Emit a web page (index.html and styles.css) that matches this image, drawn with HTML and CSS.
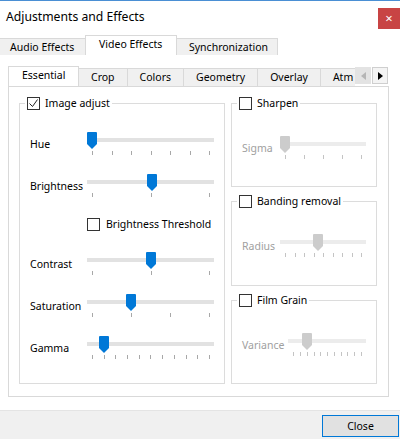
FILE: index.html
```html
<!DOCTYPE html>
<html lang="en">
<head>
  <meta charset="UTF-8">
  <title>Adjustments and Effects</title>
  <link rel="stylesheet" href="styles.css">
</head>
<body>

<div class="window">
  <header class="titlebar">
    <span class="title">Adjustments and Effects</span>
    <span class="close-x">&times;</span>
  </header>

  <nav class="tabs outer-tabs">
    <span class="tab">Audio Effects</span>
    <span class="tab active">Video Effects</span>
    <span class="tab">Synchronization</span>
  </nav>

  <main class="outer-pane">
    <nav class="inner-tabs">
      <div class="tabs tab-strip">
        <span class="tab active">Essential</span>
        <span class="tab">Crop</span>
        <span class="tab">Colors</span>
        <span class="tab">Geometry</span>
        <span class="tab">Overlay</span>
        <span class="tab partial">Atm</span>
      </div>
      <span class="scroll-btn disabled">
        <svg width="5" height="8" viewBox="0 0 5 8"><path d="M5 0v8L0 4z"/></svg>
      </span>
      <span class="scroll-btn">
        <svg width="5" height="8" viewBox="0 0 5 8"><path d="M0 0v8l5-4z"/></svg>
      </span>
    </nav>

    <div class="inner-pane">
      <fieldset class="group group-main">
        <legend><span class="check checked"><svg width="11" height="11" viewBox="0 0 11 11"><path d="M1.5 5.5l3 3 5-7" fill="none" stroke="#222" stroke-width="1"/></svg></span>Image adjust</legend>

        <div class="row">
          <span class="label">Hue</span>
          <div class="slider" style="--v:0">
            <div class="track"></div>
            <svg class="thumb" width="10" height="17" viewBox="0 0 10 17"><path d="M1 0h8a1 1 0 0 1 1 1v11l-5 5-5-5V1a1 1 0 0 1 1-1z"/></svg>
            <div class="ticks"><i></i><i></i><i></i><i></i><i></i><i></i><i></i></div>
          </div>
        </div>

        <div class="row">
          <span class="label">Brightness</span>
          <div class="slider" style="--v:0.51">
            <div class="track"></div>
            <svg class="thumb" width="10" height="17" viewBox="0 0 10 17"><path d="M1 0h8a1 1 0 0 1 1 1v11l-5 5-5-5V1a1 1 0 0 1 1-1z"/></svg>
            <div class="ticks"><i></i><i></i><i></i></div>
          </div>
        </div>

        <div class="row threshold">
          <span class="check"></span>Brightness Threshold
        </div>

        <div class="row">
          <span class="label">Contrast</span>
          <div class="slider" style="--v:0.5">
            <div class="track"></div>
            <svg class="thumb" width="10" height="17" viewBox="0 0 10 17"><path d="M1 0h8a1 1 0 0 1 1 1v11l-5 5-5-5V1a1 1 0 0 1 1-1z"/></svg>
            <div class="ticks"><i></i><i></i><i></i></div>
          </div>
        </div>

        <div class="row">
          <span class="label">Saturation</span>
          <div class="slider" style="--v:0.33">
            <div class="track"></div>
            <svg class="thumb" width="10" height="17" viewBox="0 0 10 17"><path d="M1 0h8a1 1 0 0 1 1 1v11l-5 5-5-5V1a1 1 0 0 1 1-1z"/></svg>
            <div class="ticks"><i></i><i></i><i></i><i></i></div>
          </div>
        </div>

        <div class="row">
          <span class="label">Gamma</span>
          <div class="slider" style="--v:0.1">
            <div class="track"></div>
            <svg class="thumb" width="10" height="17" viewBox="0 0 10 17"><path d="M1 0h8a1 1 0 0 1 1 1v11l-5 5-5-5V1a1 1 0 0 1 1-1z"/></svg>
            <div class="ticks"><i></i><i></i><i></i><i></i><i></i><i></i><i></i><i></i><i></i><i></i><i></i></div>
          </div>
        </div>
      </fieldset>

      <div class="side">
        <fieldset class="group group-side">
          <legend><span class="check"></span>Sharpen</legend>
          <div class="row disabled">
            <span class="label">Sigma</span>
            <div class="slider" style="--v:0">
              <div class="track"></div>
              <svg class="thumb" width="10" height="17" viewBox="0 0 10 17"><path d="M1 0h8a1 1 0 0 1 1 1v11l-5 5-5-5V1a1 1 0 0 1 1-1z"/></svg>
              <div class="ticks"><i></i><i></i><i></i><i></i><i></i></div>
            </div>
          </div>
        </fieldset>

        <fieldset class="group group-side">
          <legend><span class="check"></span>Banding removal</legend>
          <div class="row disabled">
            <span class="label">Radius</span>
            <div class="slider" style="--v:0.43">
              <div class="track"></div>
              <svg class="thumb" width="10" height="17" viewBox="0 0 10 17"><path d="M1 0h8a1 1 0 0 1 1 1v11l-5 5-5-5V1a1 1 0 0 1 1-1z"/></svg>
              <div class="ticks"><i></i><i></i><i></i><i></i><i></i><i></i><i></i><i></i><i></i></div>
            </div>
          </div>
        </fieldset>

        <fieldset class="group group-side">
          <legend><span class="check"></span>Film Grain</legend>
          <div class="row disabled">
            <span class="label">Variance</span>
            <div class="slider" style="--v:0.2">
              <div class="track"></div>
              <svg class="thumb" width="10" height="17" viewBox="0 0 10 17"><path d="M1 0h8a1 1 0 0 1 1 1v11l-5 5-5-5V1a1 1 0 0 1 1-1z"/></svg>
              <div class="ticks"><i></i><i></i><i></i><i></i><i></i><i></i><i></i><i></i><i></i><i></i><i></i></div>
            </div>
          </div>
        </fieldset>
      </div>
    </div>
  </main>

  <footer class="footer">
    <button class="btn">Close</button>
  </footer>
</div>

</body>
</html>
```

FILE: styles.css
```css
body {
  margin: 0;
  font-family: "Noto Sans", sans-serif;
  font-size: 10.5px;
  color: #000;
  background: #fff;
}
.window {
  width: 400px;
  height: 439px;
  display: flex;
  flex-direction: column;
  overflow: hidden;
}
.titlebar {
  height: 33px;
  border-top: 1px solid #4a8fd4;
  display: flex;
  padding-left: 6px;
  background: #fff;
}
.title {
  font-size: 12.2px;
  line-height: 32px;
}
.close-x {
  margin-left: auto;
  margin-top: 7px;
  width: 22px;
  height: 21px;
  background: #c84444;
  color: #fff;
  font-size: 13px;
  line-height: 20px;
  text-align: center;
}

/* tab headers */
.tabs {
  display: flex;
  align-items: flex-end;
}
.tab {
  height: 17px;
  line-height: 16px;
  padding: 0 11px;
  background: #f0f0f0;
  border: 1px solid #d9d9d9;
  border-bottom: none;
  margin-right: -1px;
  white-space: nowrap;
  box-sizing: border-box;
}
.tab.active {
  height: 20px;
  background: #fff;
  position: relative;
}
.outer-tabs {
  height: 21px;
}
.outer-tabs .tab:first-child {
  border-left: none;
  padding-left: 10px;
  width: 86px;
}
.outer-tabs .tab.active {
  width: 92px;
  padding-left: 13px;
}
.outer-tabs .tab:last-child {
  width: 102px;
  padding-left: 12px;
}

.outer-pane {
  flex: 1;
  background: #fff;
  padding: 11px 11px 13px 8px;
  display: flex;
  flex-direction: column;
}
.inner-tabs {
  height: 20px;
  display: flex;
  align-items: flex-start;
}
.tab-strip {
  width: 347px;
  height: 20px;
  overflow: hidden;
}
.tab-strip .tab {
  height: 18px;
  line-height: 17px;
  padding: 0 12px;
}
.tab-strip .tab.active {
  height: 20px;
  width: 71px;
  padding-left: 13px;
}
.tab-strip .tab.partial {
  flex: 1;
  border-right: none;
  padding-right: 0;
}
.scroll-btn {
  width: 16px;
  height: 17px;
  margin-top: 1px;
  box-sizing: border-box;
  border: 1px solid #cfcfcf;
  background: #f4f4f4;
  display: flex;
  align-items: center;
  justify-content: center;
}
.scroll-btn svg {
  fill: #000;
}
.scroll-btn.disabled {
  background: #e3e3e3;
  border-color: #e3e3e3;
  margin-right: 1px;
}
.scroll-btn.disabled svg {
  fill: #b5b5b5;
}

.inner-pane {
  flex: 1;
  border: 1px solid #d9d9d9;
  padding: 10px 11px 12px 10px;
  display: flex;
  gap: 6px;
}

/* group boxes */
.group {
  margin: 0;
  min-width: 0;
  border: 1px solid #dcdcdc;
  padding: 22px 10px 0 10px;
  display: flex;
  flex-direction: column;
  gap: 18px;
}
.group legend {
  margin-left: -5px;
  padding: 0 2px;
  display: flex;
  align-items: center;
  gap: 5px;
  line-height: 13px;
}
.group-main {
  width: 206px;
  box-sizing: border-box;
}
.side {
  flex: 1;
  display: flex;
  flex-direction: column;
  gap: 8px;
}
.group-side {
  flex: 1;
  padding-top: 26px;
}
.check {
  width: 13px;
  height: 13px;
  box-sizing: border-box;
  border: 1px solid #333;
  background: #fff;
  display: inline-flex;
  align-items: center;
  justify-content: center;
}

/* slider rows */
.row {
  display: flex;
  align-items: center;
}
.label {
  width: 57px;
  flex-shrink: 0;
  white-space: nowrap;
}
.threshold {
  gap: 6px;
  padding-left: 57px;
  margin: 2px 0 3px;
  line-height: 13px;
}
.group-side .label {
  width: auto;
  min-width: 38px;
  padding-right: 4px;
  box-sizing: border-box;
}
.row.disabled {
  color: #a0a0a0;
}
.slider {
  flex: 1;
  position: relative;
  height: 24px;
}
.track {
  margin-top: 6px;
  height: 4px;
  background: #e2e2e2;
}
.thumb {
  position: absolute;
  top: 0;
  left: calc(var(--v) * (100% - 10px));
  fill: #0078d7;
}
.ticks {
  margin-top: 9px;
  height: 4px;
  padding: 0 4px 0 5px;
  display: flex;
  justify-content: space-between;
}
.ticks i {
  width: 1px;
  background: #a8a8a8;
}
.row.disabled .track {
  background: #ececec;
}
.row.disabled .thumb {
  fill: #cccccc;
}
.row.disabled .ticks i {
  background: #c4c4c4;
}

.footer {
  height: 29px;
  background: #f0f0f0;
  border-top: 1px solid #e4e4e4;
  box-sizing: border-box;
  display: flex;
  justify-content: flex-end;
  padding: 4px 1px 0 0;
}
.btn {
  width: 77px;
  height: 22px;
  border: 1px solid #0078d7;
  background: #e1e1e1;
  font-family: "Noto Sans", sans-serif;
  font-size: 10.5px;
  color: #000;
  padding: 0;
}
```
